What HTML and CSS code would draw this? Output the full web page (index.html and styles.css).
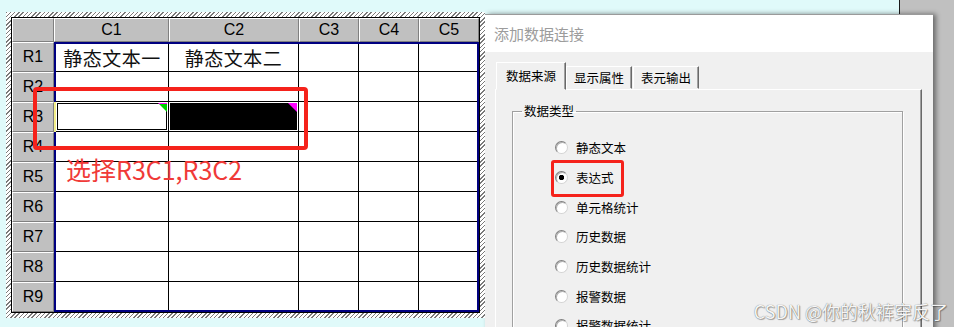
FILE: index.html
```html
<!DOCTYPE html>
<html lang="zh-CN">
<head>
    <meta charset="UTF-8">
    <meta name="viewport" content="width=device-width, initial-scale=1.0">
    <title>添加数据连接</title>
    <link rel="stylesheet" href="styles.css">
</head>
<body>
    <div class="desk">
        <div class="sheet">
            <div class="frame">
                <div class="corner"></div>
                <div class="colheads">
                    <div>C1</div><div>C2</div><div>C3</div><div>C4</div><div>C5</div>
                </div>
                <div class="rowheads">
                    <div>R1</div><div>R2</div><div>R3</div><div>R4</div><div>R5</div>
                    <div>R6</div><div>R7</div><div>R8</div><div>R9</div>
                </div>
                <div class="cells">
                    <div>静态文本一</div><div>静态文本二</div><div></div><div></div><div></div>
                    <div></div><div></div><div></div><div></div><div></div>
                    <div class="sel sel-first"></div><div class="sel sel-dark"></div><div></div><div></div><div></div>
                    <div></div><div></div><div></div><div></div><div></div>
                    <div></div><div></div><div></div><div></div><div></div>
                    <div></div><div></div><div></div><div></div><div></div>
                    <div></div><div></div><div></div><div></div><div></div>
                    <div></div><div></div><div></div><div></div><div></div>
                    <div></div><div></div><div></div><div></div><div></div>
                </div>
            </div>
            <div class="mark"></div>
            <div class="note">选择R3C1,R3C2</div>
        </div>

        <div class="dialog">
            <div class="titlebar">添加数据连接</div>
            <div class="dlg-body">
                <div class="tabs">
                    <div class="tab active">数据来源</div>
                    <div class="tab">显示属性</div>
                    <div class="tab">表元输出</div>
                </div>
                <div class="tab-panel">
                    <fieldset class="group">
                        <legend>数据类型</legend>
                        <ul class="radios">
                            <li><span class="radio"></span>静态文本</li>
                            <li class="hl"><span class="radio checked"></span>表达式</li>
                            <li><span class="radio"></span>单元格统计</li>
                            <li><span class="radio"></span>历史数据</li>
                            <li><span class="radio"></span>历史数据统计</li>
                            <li><span class="radio"></span>报警数据</li>
                            <li><span class="radio"></span>报警数据统计</li>
                        </ul>
                    </fieldset>
                </div>
            </div>
        </div>
    </div>
    <div class="watermark">CSDN @你的秋裤穿反了</div>
</body>
</html>
```

FILE: styles.css
```css
*{padding:0; margin:0; box-sizing:border-box;}
li{list-style:none;}

html,body{
    width:954px;
    height:327px;
    overflow:hidden;
}
body{
    position:relative;
    font-family:"Noto Sans CJK SC", sans-serif;
    background:linear-gradient(to right, #e0fafa 0 899px, #1a1a1a 899px 900px, #c0c0c0 900px);
}
.desk{
    display:flex;
    align-items:flex-start;
}

/* 왼쪽 표 (hatched border) */
.sheet{
    position:relative;
    margin:12px 0 0 6px;
    padding:5px;
    background:repeating-linear-gradient(135deg, #7a7a7a 0 1px, #fff 1px 3px);
}
.frame{
    display:grid;
    grid-template-columns:42px 425px;
    grid-template-rows:24px 270px;
    border:1px solid #000;
    background:#c0c0c0;
}
.corner{
    border-top:1px solid #fff;
    border-left:1px solid #fff;
    border-right:1px solid #808080;
    border-bottom:1px solid #808080;
}
.colheads{
    display:grid;
    grid-template-columns:115px 130px 60px 60px 60px;
}
.colheads div,
.rowheads div{
    display:flex;
    align-items:center;
    justify-content:center;
    font-family:"Liberation Sans", Arial, sans-serif;
    font-size:16px;
    color:#000;
    border-top:1px solid #fff;
    border-left:1px solid #fff;
    border-right:1px solid #808080;
    border-bottom:1px solid #808080;
}
.rowheads{
    display:grid;
    grid-template-rows:repeat(9, 30px);
}
.cells{
    display:grid;
    grid-template-columns:113px 130px 60px 60px 58px;
    grid-template-rows:28px repeat(7, 30px) 28px;
    border:2px solid #000080;
    background:#fff;
}
.cells div{
    position:relative;
    display:flex;
    align-items:center;
    justify-content:center;
    border-right:1px solid #000;
    border-bottom:1px solid #000;
    font-size:19px;
    letter-spacing:0.5px;
    color:#111;
}
.cells div:nth-child(5n){border-right:none;}
.cells div:nth-last-child(-n+5){border-bottom:none;}

.cells .sel{box-shadow:inset 0 0 0 1px #fff, inset 0 0 0 2px #000;}
.cells .sel-first{box-shadow:inset 0 0 0 1px #fff, inset 0 0 0 2px #000, -2px 0 0 0 #f4f08a;}
.cells .sel-dark{background:#000;}
.cells .sel::after{
    content:"";
    position:absolute;
    top:1px;
    right:1px;
    width:9px;
    height:9px;
    clip-path:polygon(0 0, 100% 0, 100% 100%);
}
.cells .sel-first::after{background:linear-gradient(#f0f 0 1px, #00d000 1px);}
.cells .sel-dark::after{background:#f0f;}

/* 빨간 표시 */
.mark{
    position:absolute;
    left:27px;
    top:75px;
    width:275px;
    height:63px;
    border:4px solid #f5221b;
    border-radius:4px;
}
.note{
    position:absolute;
    left:60px;
    top:145px;
    font-size:25px;
    line-height:1;
    color:#f03a38;
    white-space:nowrap;
}

/* 오른쪽 대화상자 */
.dialog{
    width:448px;
    height:320px;
    margin-top:14px;
    background:#f0f0f0;
    border-top:1px solid #9a9a9a;
    box-shadow:3px 0 5px rgba(0,0,0,.45);
}
.titlebar{
    height:37px;
    padding-left:9px;
    line-height:37px;
    background:#fff;
    font-size:15px;
    color:#9c9c9c;
}
.dlg-body{
    padding:10px 11px 0 10px;
}
.tabs{
    display:flex;
    align-items:flex-end;
    height:27px;
    padding-left:1px;
}
.tab{
    height:23px;
    padding:0 7px;
    line-height:22px;
    font-size:12.5px;
    color:#000;
    border:1px solid;
    border-color:#fff #696969 transparent #fff;
    box-shadow:inset -1px 0 0 #a0a0a0;
    margin-right:1px;
}
.tab.active{
    position:relative;
    z-index:1;
    height:28px;
    margin-bottom:-1px;
    margin-right:0;
    padding:0 9px;
    line-height:26px;
    background:#f0f0f0;
}
.tab-panel{
    height:260px;
    padding:12px 18px 0 16px;
    border:1px solid;
    border-color:#fff #696969 #696969 #fff;
    box-shadow:inset -1px -1px 0 #a0a0a0;
}
.group{
    height:260px;
    border:1px solid #a0a0a0;
    box-shadow:inset 1px 1px 0 #fff, 1px 1px 0 #fff;
    padding:0;
}
.group legend{
    margin-left:9px;
    padding:0 2px;
    font-size:12.5px;
    line-height:18px;
}
.radios{
    padding-top:13px;
}
.radios li{
    position:relative;
    display:flex;
    align-items:center;
    height:29.7px;
    padding-left:42px;
    font-size:12.5px;
    color:#000;
}
.radio{
    width:13px;
    height:13px;
    margin-right:8px;
    border-radius:50%;
    background:#fff;
    border:1px solid;
    border-color:#808080 #d4d4d4 #d4d4d4 #808080;
    box-shadow:inset 1px 1px 0 #b0b0b0;
}
.radio.checked{
    background:radial-gradient(circle, #000 0 2.4px, #fff 3px);
}
.radios li.hl::after{
    content:"";
    position:absolute;
    left:38px;
    top:-3px;
    width:67px;
    height:31px;
    border:3px solid #f5221b;
    border-radius:3px;
}

.watermark{
    position:absolute;
    right:6px;
    bottom:7px;
    font-size:18px;
    line-height:1;
    color:rgba(255,255,255,.95);
    text-shadow:0 0 1px rgba(0,0,0,.6), 1px 1px 1px rgba(0,0,0,.3);
}
```
